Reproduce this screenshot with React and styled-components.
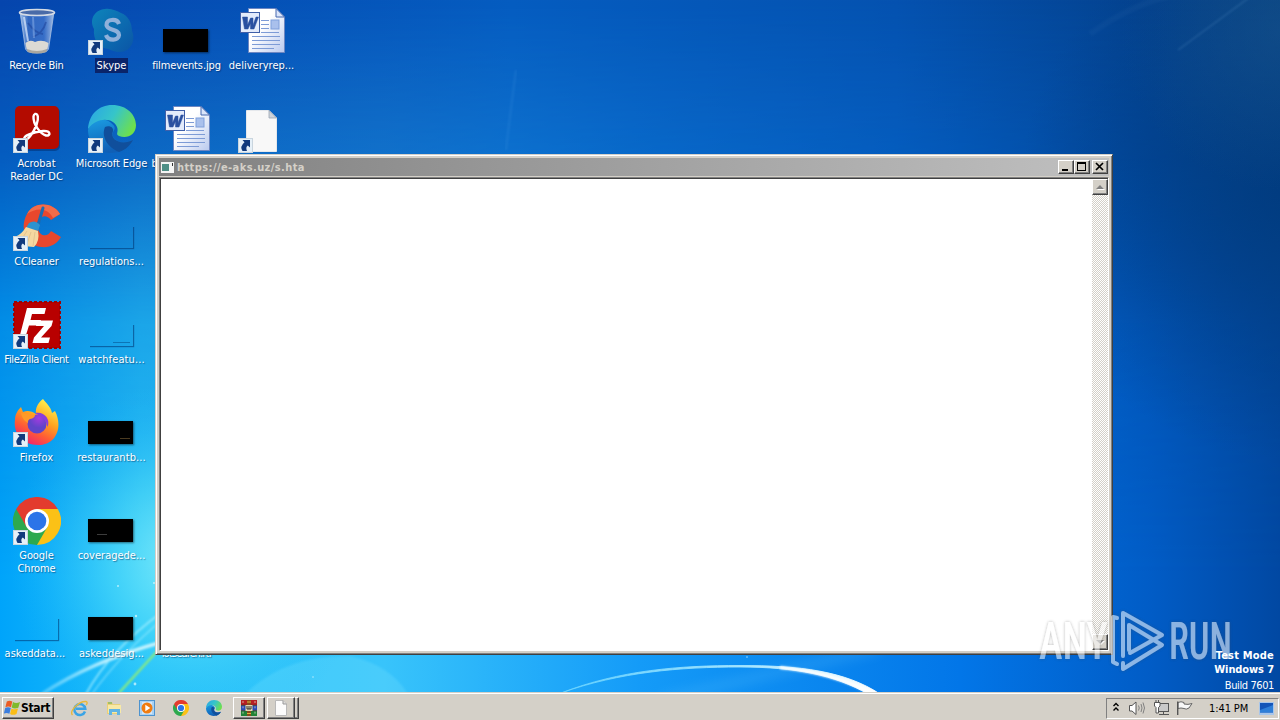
import React from "react"
import styled, { createGlobalStyle, css } from "styled-components"

const UI_FONT = `"DejaVu Sans Condensed", "DejaVu Sans", sans-serif`
const FACE = "#d4d0c8"

const GlobalStyle = createGlobalStyle`
  body {
    margin: 0;
    overflow: hidden;
    font-family: ${UI_FONT};
    font-stretch: condensed;
    font-size: 11px;
  }
  svg {
    display: block;
    flex: none;
  }
`

const raised = css`
  border: 1px solid;
  border-color: #fff #404040 #404040 #fff;
  box-shadow: inset -1px -1px 0 #808080;
  background: ${FACE};
`

const Screen = styled.div`
  position: relative;
  width: 1280px;
  height: 720px;
  overflow: hidden;
  display: flex;
  flex-direction: column;
`

const Wallpaper = styled.svg`
  position: absolute;
  inset: 0;
`

const Desktop = styled.main`
  position: relative;
  flex: 1;
`

const IconGrid = styled.div`
  display: grid;
  grid-auto-flow: column;
  grid-template-rows: repeat(7, 98px);
  grid-auto-columns: 75px;
  width: 300px;
  height: 686px;
  margin-left: -1px;
`

const Shortcut = styled.div`
  display: flex;
  flex-direction: column;
  align-items: center;
  padding-top: 7px;
`

const Picture = styled.div`
  position: relative;
  width: 48px;
  height: 48px;
  flex: none;
  margin-left: 1px;
`

const Arrow = styled.svg`
  position: absolute;
  left: 0;
  bottom: 0;
`

const Label = styled.span`
  margin-top: 3px;
  padding: 1px 2px;
  line-height: 13px;
  text-align: center;
  white-space: pre;
  color: #fff;
  letter-spacing: ${props => props.$spacing || 0}px;
  text-shadow: ${props => (props.$selected ? "none" : "1px 1px 1px rgba(0, 20, 60, .45)")};
  background: ${props => (props.$selected ? "#0a246a" : "transparent")};
`

const Thumb = styled.div`
  position: absolute;
  left: 0;
  top: 22px;
  width: 45px;
  height: 23px;
  display: flex;
  align-items: flex-end;
  justify-content: ${props => (props.$mark === "left" ? "flex-start" : "flex-end")};
  background: ${props => (props.$empty ? "transparent" : "#000")};
  box-shadow: ${props => (props.$empty ? "1px 1px 1px rgba(0, 50, 110, .55)" : "1px 1px 2px rgba(0, 0, 0, .5)")};
  ${props => props.$empty && css`clip-path: inset(2px -3px -3px 2px);`}
`

const ThumbMark = styled.i`
  width: ${props => props.$width || 10}px;
  height: 1px;
  margin: 0 3px ${props => props.$up || 5}px 9px;
  background: ${props => props.$color};
`

const Window = styled.section`
  position: absolute;
  left: 155px;
  top: 154px;
  width: 958px;
  height: 501px;
  box-sizing: border-box;
  display: flex;
  flex-direction: column;
  padding: 2px;
  border: 1px solid;
  border-color: ${FACE} #404040 #404040 ${FACE};
  box-shadow: inset 1px 1px 0 #fff, inset -1px -1px 0 #808080;
  background: ${FACE};
`

const TitleBar = styled.header`
  display: flex;
  align-items: center;
  gap: 3px;
  height: 18px;
  margin: 1px 1px 1px;
  padding: 0 1px 0 2px;
  background: linear-gradient(to right, #808080, #c0c0c0);
`

const Title = styled.h1`
  flex: 1;
  margin: 0;
  font-size: 11px;
  font-weight: bold;
  letter-spacing: ${props => props.$spacing}px;
  color: ${FACE};
`

const Controls = styled.div`
  display: flex;
`

const ControlButton = styled.div`
  ${raised}
  box-sizing: border-box;
  width: 16px;
  height: 14px;
  margin-left: ${props => (props.$apart ? 2 : 0)}px;
`

const Client = styled.div`
  flex: 1;
  display: flex;
  justify-content: flex-end;
  margin: 0 1px 1px;
  border: 1px solid;
  border-color: #808080 #fff #fff #808080;
  box-shadow: inset 1px 1px 0 #404040;
  background: #fff;
`

const ScrollBar = styled.div`
  width: 16px;
  display: flex;
  flex-direction: column;
  justify-content: space-between;
  margin: 1px 0 0;
  background: repeating-conic-gradient(#fff 0 25%, ${FACE} 0 50%) 0 0 / 2px 2px;
`

const ScrollButton = styled.div`
  ${raised}
  box-sizing: border-box;
  width: 16px;
  height: 16px;
`

const Watermark = styled.svg`
  position: absolute;
  left: 1030px;
  top: 600px;
  overflow: visible;
`

const BuildInfo = styled.div`
  position: absolute;
  right: 6px;
  bottom: -1px;
  text-align: right;
  line-height: 14px;
  color: #fff;
`

const InfoLine = styled.p`
  margin: 0;
  padding-top: ${props => (props.$bold ? 0 : 2)}px;
  font-weight: ${props => (props.$bold ? "bold" : "normal")};
  letter-spacing: ${props => props.$spacing || 0}px;
`

const Taskbar = styled.footer`
  position: relative;
  box-sizing: border-box;
  height: 28px;
  display: flex;
  align-items: center;
  padding: 3px 2px 0;
  border-top: 1px solid ${FACE};
  box-shadow: inset 0 1px 0 #fff;
  background: ${FACE};
`

const StartButton = styled.div`
  ${raised}
  box-sizing: border-box;
  width: 52px;
  height: 22px;
  display: flex;
  align-items: center;
  gap: 1px;
  padding-left: 1px;
  font-size: 12px;
  font-weight: bold;
  letter-spacing: ${props => props.$spacing}px;
`

const QuickLaunch = styled.nav`
  display: flex;
  align-items: center;
  gap: 17.6px;
  margin: 0 11px 0 17px;
`

const TaskButton = styled.div`
  ${raised}
  box-sizing: border-box;
  width: ${props => (props.$stacked ? 28 : 32)}px;
  height: 22px;
  display: flex;
  align-items: center;
  justify-content: center;
  margin-right: 2px;
`

const StackedEdge = styled.div`
  box-sizing: border-box;
  width: 4px;
  height: 22px;
  margin-left: -2px;
  border-top: 1px solid #fff;
  border-right: 1px solid #404040;
  border-bottom: 1px solid #404040;
  box-shadow: inset -1px -1px 0 #808080;
`

const Tray = styled.div`
  box-sizing: border-box;
  width: 173px;
  height: 21px;
  display: flex;
  align-items: center;
  margin-left: auto;
  margin-right: -1px;
  padding-left: 5px;
  border: 1px solid;
  border-color: #808080 #fff #fff #808080;
`

const Clock = styled.time`
  flex: none;
  width: 40px;
  margin: 0 10px 0 15px;
  white-space: nowrap;
  letter-spacing: ${props => props.$spacing}px;
`

const RecycleBin = () => (
  <svg width="48" height="48" viewBox="0 0 48 48">
    <defs>
      <linearGradient id="bin" x1="0" x2="1">
        <stop offset="0" stopColor="#b5d0f2" stopOpacity=".9" />
        <stop offset=".25" stopColor="#3e70c4" stopOpacity=".8" />
        <stop offset=".7" stopColor="#4a7bd0" stopOpacity=".7" />
        <stop offset="1" stopColor="#b9cdea" stopOpacity=".9" />
      </linearGradient>
    </defs>
    <path d="M7 5 L12.500 42 Q14 46 24 46 Q34 46 35.500 42 L41 5Z" fill="url(#bin)" stroke="#a9c0e2" strokeWidth=".8" />
    <path d="M12.500 36 Q17 32 22 35 Q29 32 35.500 36 L34.500 42 Q30 45 24 45 Q15 45 13.500 42Z" fill="#dcdad4" />
    <path d="M14 42 Q24 46 34 42 L33.500 45 Q24 48 14.500 45Z" fill="#aaa79f" />
    <path d="M15 16 Q22 26 30 27 M33 15 Q30 26 20 30" stroke="#1f469c" strokeWidth="1.800" fill="none" opacity=".6" />
    <path d="M11 10 L15 34" stroke="#d5e4fa" strokeWidth="2" opacity=".75" />
    <path d="M20 10 L21 31" stroke="#8eb2ea" strokeWidth="2" opacity=".5" />
    <ellipse cx="24" cy="5.500" rx="17.500" ry="3" fill="#4a6ba8" stroke="#d5dbe5" strokeWidth="1.600" />
  </svg>
)

const Skype = () => (
  <svg width="48" height="48" viewBox="0 0 48 48">
    <defs>
      <linearGradient id="skype" x1="0" x2="1" y1="0" y2="1">
        <stop offset="0" stopColor="#0d84bb" />
        <stop offset="1" stopColor="#0b55a6" />
      </linearGradient>
    </defs>
    <path d="M17 2 C23 1 29 4 33 6 C41 9 44 17 44 24 C48 33 43 45 32 45 C26 45 24 43 20 42 C10 41 5 32 6 22 C1 13 6 3 17 2Z" fill="url(#skype)" />
    <path d="M31 17 C29 11 18 12 18.500 18 C19 24 31 21.500 31 28 C30.500 34.500 20 34 18 28" fill="none" stroke="#8fb0da" strokeWidth="4.200" />
  </svg>
)

const Acrobat = () => (
  <svg width="48" height="48" viewBox="0 0 48 48">
    <rect x="3" y="2.500" width="44" height="43.500" rx="5" fill="#001f55" opacity=".4" />
    <rect x="2" y="1" width="44" height="43" rx="5" fill="#b30b00" />
    <path d="M22 9 C25 8 26 13 23.500 20 C20 29 14 36 11.500 34.500 C9 31 20 27 30 26 C38 25.500 38 31 33 30.500 C27 28.500 20 19 20.500 11.500 C20.700 10 21 9.400 22 9Z" fill="none" stroke="#fff" strokeWidth="2.400" />
  </svg>
)

const Edge = ({ size = 48, id = "edge" }) => (
  <svg width={size} height={size} viewBox="0 0 48 48">
    <defs>
      <linearGradient id={`${id}-top`} x1="0" x2="1" y1=".2" y2=".6">
        <stop offset="0" stopColor="#2aa7e4" />
        <stop offset=".5" stopColor="#36c5c9" />
        <stop offset="1" stopColor="#6fe04a" />
      </linearGradient>
      <linearGradient id={`${id}-body`} x1="0" x2=".3" y1="0" y2="1">
        <stop offset="0" stopColor="#1b9de2" />
        <stop offset="1" stopColor="#0f5fb6" />
      </linearGradient>
    </defs>
    <path d="M0 25 C2 15 14 11 22 17 C27 21 28 23 25 27 C22 34 33 41 45 35 C40 44 31 48 23 48 C10 48 0 38 0 25Z" fill={`url(#${id}-body)`} />
    <path d="M17 22 C13 31 19 42 31 47 C38 45 43 39 45 35 C34 41 21 35 25 26 C26 23 22 20 17 22Z" fill="#104f9c" />
    <path d="M0 24 C1 9 11 0 24 0 C39 0 48 10 48 20 C48 30 39 34 31 31 C27 29 31 27 29 22 C26 13 9 11 0 24Z" fill={`url(#${id}-top)`} />
  </svg>
)

const CCleaner = () => (
  <svg width="48" height="48" viewBox="0 0 48 48">
    <path d="M47 11 C40 -1 21 -2 14 11 C6 25 13 43 28 44 C37 45 44 41 48 34 L38 28 C35 34 27 34 25 26 C22 17 31 8 38 17Z" fill="#e8472d" />
    <path d="M47 11 C40 -1 21 -2 14 11 C24 4 35 5 40 15Z" fill="#f26c4a" />
    <path d="M30 5 L25 22" stroke="#1a6cb4" strokeWidth="3" strokeLinecap="round" />
    <path d="M16 20 Q22 16 27 22 L25 28 L13 25Z" fill="#2c93cf" />
    <path d="M13 24 L25 28 Q27 38 21 44 Q9 44 2 34 Q9 31 13 24Z" fill="#f5d8a0" />
    <path d="M14 28 L8 37 M18 29 L14 41 M22 29 L20 43" stroke="#e4c490" />
  </svg>
)

const FileZilla = () => (
  <svg width="48" height="48" viewBox="0 0 48 48">
    <rect x="1" y="1" width="46" height="46" fill="#b80000" />
    <rect x="1" y="1" width="46" height="46" fill="none" stroke="#a00000" strokeWidth="2" strokeDasharray="3 2" />
    <path d="M14 7 H33 L31.500 13 H19 L17.500 19 H28 L26.500 24.500 H16 L13 34 H7Z" fill="#fff" />
    <path d="M24 19.500 H40 L38.500 25 L28 36.500 H37 L35.500 42 H19.500 L21 36.500 L31 25 H23Z" fill="#fff" />
  </svg>
)

const Firefox = () => (
  <svg width="48" height="48" viewBox="0 0 48 48">
    <defs>
      <linearGradient id="fox" x1=".8" x2=".3" y1=".05" y2="1">
        <stop offset="0" stopColor="#fff44f" />
        <stop offset=".4" stopColor="#ffa41f" />
        <stop offset=".7" stopColor="#ff5b36" />
        <stop offset="1" stopColor="#ee2072" />
      </linearGradient>
      <radialGradient id="globe" cx=".6" cy=".2">
        <stop offset="0" stopColor="#a33be0" />
        <stop offset="1" stopColor="#6144c8" />
      </radialGradient>
    </defs>
    <path d="M30 0 C33 4 38 8 39 14 L42 12 C50 27 44 46 25 46 C9 46 0 34 2 21 C2 15 5 11 8 8 L10 13 C14 11 19 12 23 15 C22 8 26 3 30 0Z" fill="url(#fox)" />
    <circle cx="24" cy="25" r="9.500" fill="url(#globe)" />
    <path d="M8 14 L22 16 Q22 19 17 20 Q14 21 15 24 C13 23 9 20 8 14Z" fill="#ff9a28" />
    <path d="M22 14 C31 12 38 20 34.500 28 Q33 20 27 17Z" fill="#8a3ddc" />
  </svg>
)

const Chrome = ({ size = 48 }) => (
  <svg width={size} height={size} viewBox="0 0 48 48">
    <path d="M24 24 L3.200 12 A24 24 0 0 1 44.800 12Z" fill="#e33b2e" />
    <path d="M24 24 L44.800 12 A24 24 0 0 1 24 48Z" fill="#fbc116" />
    <path d="M24 24 L24 48 A24 24 0 0 1 3.200 12Z" fill="#2da94f" />
    <path d="M24 12 H44.800 L40 24 H30Z" fill="#fbc116" />
    <path d="M3.200 12 L13.500 30 L24 24 L24 12Z" fill="#e33b2e" />
    <path d="M24 48 L34.400 30 L24 24 L13.500 30Z" fill="#2da94f" />
    <circle cx="24" cy="24" r="12" fill="#fff" />
    <circle cx="24" cy="24" r="9.300" fill="#2b74e8" />
  </svg>
)

const WordDoc = () => (
  <svg width="48" height="48" viewBox="0 0 48 48">
    <defs>
      <linearGradient id="page" x1="0" x2="1" y1="0" y2="1">
        <stop offset=".4" stopColor="#fff" />
        <stop offset="1" stopColor="#b9c9ee" />
      </linearGradient>
    </defs>
    <path d="M10.500 1.500 H38 L46.500 10 V45.500 H10.500Z" fill="url(#page)" stroke="#6d87c2" />
    <path d="M38 1.500 V10 H46.500Z" fill="#dbe5fa" stroke="#4668af" />
    <path d="M23 13.500 H31 M23 17.500 H31 M23 21.500 H31 M23 25.500 H41 M14 29.500 H42 M14 33.500 H42 M14 37.500 H42 M14 41.500 H36" stroke="#7d9bd6" />
    <rect x="33" y="13" width="8" height="9" fill="#a9c0ec" stroke="#7f9fdb" />
    <rect x="2.500" y="5.500" width="19" height="20" fill="#e3ebfb" stroke="#3f5fa8" />
    <path d="M4.500 10 H9.500 L9.500 18 L12.500 11 H15 L15 18 L18 10 H20.500 L16 22 H12.500 L12.500 16.500 L10 22 H6.500Z" fill="#2a50a0" stroke="#2a50a0" strokeWidth=".5" />
  </svg>
)

const BlankFile = () => (
  <svg width="48" height="48" viewBox="0 0 48 48">
    <path d="M8.500 5.500 H31 L38.500 13 V46.500 H8.500Z" fill="#f8f8f8" stroke="#e5e8ec" />
    <path d="M31 5.500 V13 H38.500Z" fill="#cfd4da" stroke="#9aa5b2" strokeWidth=".8" />
  </svg>
)

const ShortcutArrow = () => (
  <Arrow width="15" height="15" viewBox="0 0 15 15">
    <rect x=".5" y=".5" width="14" height="14" fill="#e6f0f8" stroke="#c9d5de" />
    <path d="M4.500 2 H12 V9.500 L9.800 7.600 Q7.300 9.500 9 13 H4.500 Q1.500 8.500 6.500 4.300Z" fill="#123a7c" />
  </Arrow>
)

const IELogo = () => (
  <svg width="17" height="17" viewBox="0 0 17 17">
    <path d="M14 11.500 A5.500 5.500 0 1 1 14.300 8.800 H5" fill="none" stroke="#3aa4e6" strokeWidth="2.500" />
    <path d="M1.500 15 C-2 11 8 1 15 1.500 C17 2 16 4 15 5" fill="none" stroke="#e8b839" strokeWidth="1.300" />
  </svg>
)

const Folder = () => (
  <svg width="16" height="16" viewBox="0 0 16 16">
    <path d="M1 2 H6 L7 4 H14 V14 H1Z" fill="#e9cf78" />
    <path d="M2 5 H15 V13 H2Z" fill="#f8e9a6" />
    <path d="M3 15 V9 H14 V15 H11 V12 H6 V15Z" fill="#62b4e4" />
    <path d="M2 3 H6" stroke="#5dad54" />
  </svg>
)

const MediaPlayer = () => (
  <svg width="16" height="16" viewBox="0 0 16 16">
    <rect x=".5" y=".5" width="15" height="15" fill="#a9d2f4" stroke="#4d93cf" />
    <rect x="3" y="2" width="10" height="12" fill="#d4e8fa" />
    <circle cx="8" cy="8" r="5.500" fill="#f07c11" />
    <path d="M6.300 4.800 L11.300 8 L6.300 11.200Z" fill="#fff" />
  </svg>
)

// three stacked books held by a belt
const WinRar = () => (
  <svg width="16" height="16" viewBox="0 0 16 16">
    <rect width="16" height="5" fill="#b51f25" />
    <rect y="5.500" width="16" height="5" fill="#2948b5" />
    <rect y="11" width="16" height="5" fill="#218237" />
    <path d="M0 5.300 H16 M0 10.700 H16" stroke="#222" strokeWidth=".8" />
    <rect x="6" width="4" height="16" fill="#8b4a1e" />
    <rect x="4.500" y="5" width="7" height="6" fill="#e2d7b4" />
    <path d="M6 6 V9 H10 V6 M8 6 V9" stroke="#333" fill="none" />
    <path d="M6 2 H10 M6 13.500 H10" stroke="#e4b43c" />
    <path d="M2 1 V15 M14 1 V15" stroke="#e8e2d0" strokeWidth=".7" strokeDasharray="2 3.300" />
  </svg>
)

const WindowsFlag = () => (
  <svg width="16" height="16" viewBox="0 0 16 16">
    <path d="M2.800 1.600 Q5.500 0 8.300 1.600 L7 7.200 Q4.500 5.600 1.400 7.200Z" fill="#ea5b24" />
    <path d="M9 2 Q12 3.800 16 2 L14.300 7.700 Q10.800 9.400 7.700 7.600Z" fill="#7fba2c" />
    <path d="M1.200 8 Q4 6.500 6.800 8 L5.400 13.700 Q2.500 12.200 -.2 13.700Z" fill="#3c7ede" />
    <path d="M7.500 8.400 Q10.500 10.200 14 8.500 L12.500 14 Q9 15.700 6.100 14Z" fill="#fabd16" />
  </svg>
)

const shortcuts = [
  { label: "Recycle Bin", icon: <RecycleBin />, spacing: -0.25 },
  { label: "Acrobat\nReader DC", icon: <Acrobat />, link: true },
  { label: "CCleaner", icon: <CCleaner />, link: true, spacing: -0.1 },
  { label: "FileZilla Client", icon: <FileZilla />, link: true, spacing: -0.32 },
  { label: "Firefox", icon: <Firefox />, link: true, spacing: 0.1 },
  { label: "Google\nChrome", icon: <Chrome />, link: true, spacing: -0.1 },
  { label: "askeddata... ", icon: <Thumb $empty /> },
  { label: "Skype", icon: <Skype />, link: true, selected: true },
  { label: "Microsoft Edge", icon: <Edge />, link: true, spacing: -0.12 },
  { label: "regulations...", icon: <Thumb $empty /> },
  { label: "watchfeatu...", icon: <Thumb $empty><ThumbMark $color="rgba(0, 70, 130, .5)" $width={17} $up={3} /></Thumb>, spacing: 0.1 },
  { label: "restaurantb...", icon: <Thumb><ThumbMark $color="#4a3a20" /></Thumb>, spacing: 0.1 },
  { label: "coveragede...", icon: <Thumb $mark="left"><ThumbMark $color="#3d3d3d" $up={7} /></Thumb> },
  { label: "askeddesig...", icon: <Thumb /> },
  { label: "filmevents.jpg", icon: <Thumb />, spacing: -0.12 },
  { label: "buttonscase...", icon: <WordDoc /> },
  { label: "", icon: null },
  { label: "", icon: null },
  { label: "", icon: null },
  { label: "", icon: null },
  { label: "lotsearch.rtf", icon: null, spacing: -0.8 },
  { label: "deliveryrep...", icon: <WordDoc /> },
  { label: "", icon: <BlankFile />, link: true },
]

const Background = () => (
  <Wallpaper width="1280" height="720" viewBox="0 0 1280 720">
    <defs>
      <linearGradient id="sky" x1="0" x2="1" y1="0" y2="0">
        <stop offset="0" stopColor="#0645ad" />
        <stop offset=".4" stopColor="#055cc0" />
        <stop offset=".7" stopColor="#0552b0" />
        <stop offset=".9" stopColor="#04428e" />
        <stop offset="1" stopColor="#0a4480" />
      </linearGradient>
      <linearGradient id="low" x1="0" x2="1">
        <stop offset="0" stopColor="#00a4fa" />
        <stop offset=".11" stopColor="#22c2fa" />
        <stop offset=".3" stopColor="#38c4fb" />
        <stop offset=".5" stopColor="#149bf8" />
        <stop offset=".75" stopColor="#0276e8" />
        <stop offset=".9" stopColor="#015cc6" />
        <stop offset="1" stopColor="#0148a2" />
      </linearGradient>
      <linearGradient id="fade" x1="0" x2="0" y1="0" y2="1">
        <stop offset="0" stopColor="#fff" stopOpacity="0" />
        <stop offset=".22" stopColor="#fff" stopOpacity=".25" />
        <stop offset=".45" stopColor="#fff" stopOpacity=".76" />
        <stop offset=".8" stopColor="#fff" />
      </linearGradient>
      <mask id="lower"><rect width="1280" height="720" fill="url(#fade)" /></mask>
      <radialGradient id="glow" cx="190" cy="560" r="180" gradientUnits="userSpaceOnUse">
        <stop offset="0" stopColor="#94f3fa" stopOpacity=".9" />
        <stop offset=".45" stopColor="#5fe3f8" stopOpacity=".5" />
        <stop offset="1" stopColor="#20b8f8" stopOpacity="0" />
      </radialGradient>
      <radialGradient id="dark" cx="1290" cy="190" r="270" gradientUnits="userSpaceOnUse">
        <stop offset="0" stopColor="#003a7e" stopOpacity=".85" />
        <stop offset="1" stopColor="#003a7e" stopOpacity="0" />
      </radialGradient>
      <radialGradient id="corner" cx="1280" cy="30" r="160" gradientUnits="userSpaceOnUse">
        <stop offset="0" stopColor="#1a5690" stopOpacity=".45" />
        <stop offset="1" stopColor="#1a5690" stopOpacity="0" />
      </radialGradient>
      <linearGradient id="arc" x1="560" x2="880" gradientUnits="userSpaceOnUse">
        <stop offset="0" stopColor="#6cd6ff" stopOpacity=".8" />
        <stop offset=".6" stopColor="#a7e6ff" />
        <stop offset="1" stopColor="#fff" />
      </linearGradient>
      <linearGradient id="ray" x1="42" x2="110" gradientUnits="userSpaceOnUse">
        <stop offset="0" stopColor="#8fe4ff" stopOpacity=".5" />
        <stop offset="1" stopColor="#d2f7ff" />
      </linearGradient>
      <filter id="soft"><feGaussianBlur stdDeviation=".8" /></filter>
      <filter id="haze"><feGaussianBlur stdDeviation="6" /></filter>
    </defs>
    <rect width="1280" height="720" fill="url(#sky)" />
    <rect width="1280" height="720" fill="url(#low)" mask="url(#lower)" />
    <rect width="1280" height="720" fill="url(#glow)" />
    <rect width="1280" height="720" fill="url(#dark)" />
    <rect width="1280" height="720" fill="url(#corner)" />
    <path d="M1178 50 L1250 -3" stroke="#4f86bd" strokeWidth="1.500" opacity=".35" filter="url(#soft)" />
    <path d="M1090 34 Q1130 5 1170 -4" stroke="#4f86bd" strokeWidth="6" fill="none" opacity=".08" filter="url(#soft)" />
    <path d="M516 70 Q510 115 506 150" stroke="#52a0e6" strokeWidth="2" fill="none" opacity=".18" filter="url(#soft)" />
    <path d="M245 694 Q285 655 350 656 Q390 665 408 694Z" fill="#8cecff" opacity=".2" filter="url(#soft)" />
    <path d="M660 700 L880 648" stroke="#7fd8ff" strokeWidth="8" opacity=".2" filter="url(#haze)" />
    <g fill="none" filter="url(#soft)">
      <path d="M42 694 Q90 662 162 642" stroke="url(#ray)" strokeWidth="3.500" opacity=".9" />
      <path d="M86 694 Q110 650 162 612" stroke="#a6efff" strokeWidth="1.800" opacity=".75" />
      <path d="M92 694 Q120 655 162 620" stroke="#a6efff" strokeWidth="1.300" opacity=".6" />
      <path d="M118 694 Q138 672 160 648" stroke="#8dec7c" strokeWidth="2.200" />
    </g>
    <path d="M561 693 C620 672 680 667 740 667 C795 667 835 675 868 694 L880 694 C845 671 800 665.500 740 665.500 C680 665.500 620 670 561 693Z" fill="url(#arc)" stroke="url(#arc)" strokeWidth=".9" />
    <path d="M780 667.500 Q835 673 873 694" stroke="#fff" strokeWidth="3" fill="none" filter="url(#soft)" />
    <g fill="#e2fbff" opacity=".7">
      <circle cx="118" cy="586" r="1" /><circle cx="154" cy="583" r="1" />
      <circle cx="136" cy="616" r="1.200" /><circle cx="135" cy="684" r="1.400" />
      <circle cx="747" cy="657" r=".8" /><circle cx="313" cy="677" r=".8" />
    </g>
  </Wallpaper>
)

const AnyRunMark = () => (
  <Watermark width="220" height="80" viewBox="0 0 220 80">
    <defs>
      <filter id="lift" x="-10%" y="-10%" width="120%" height="120%">
        <feDropShadow dx="0" dy="0" stdDeviation="1.800" floodColor="#444" floodOpacity=".7" />
      </filter>
    </defs>
    <g opacity=".55" filter="url(#lift)" fill="#fff" fontFamily="Roboto, sans-serif" fontWeight="500" fontSize="51">
      <text x="9" y="59" textLength="69" lengthAdjust="spacingAndGlyphs">ANY</text>
      <text x="139" y="59" textLength="63" lengthAdjust="spacingAndGlyphs">RUN</text>
      <g fill="none" stroke="#fff" strokeWidth="4" strokeLinejoin="round" strokeLinecap="round">
        <path d="M93 56 V13 L132 35 L100 53" />
        <path d="M99 50 V25 L132 45 L93 69 V63" />
        <path d="M87 18 L83 17 V62 L87 64" />
      </g>
    </g>
  </Watermark>
)

const App = () => {
  return (
    <Screen>
      <GlobalStyle />
      <Background />
      <Desktop>
        <IconGrid>
          {shortcuts.map((item, i) => (
            <Shortcut key={i}>
              <Picture>
                {item.icon}
                {item.link && <ShortcutArrow />}
              </Picture>
              <Label $selected={item.selected} $spacing={item.spacing}>{item.label}</Label>
            </Shortcut>
          ))}
        </IconGrid>
        <Window>
          <TitleBar>
            <svg width="13" height="11" viewBox="0 0 13 11">
              <rect width="13" height="11" fill="#f4f4f4" />
              <rect x="1" y="2" width="7" height="7" fill="#4f8f86" />
              <path d="M11.500 1 V4" stroke="#333" />
            </svg>
            <Title $spacing={0.41}>https://e-aks.uz/s.hta</Title>
            <Controls>
              <ControlButton>
                <svg width="14" height="12"><path d="M3 9 H9" stroke="#000" strokeWidth="2" /></svg>
              </ControlButton>
              <ControlButton>
                <svg width="14" height="12">
                  <path d="M2 1 H11 V10 H2Z M3 3 V9 H10 V3Z" fillRule="evenodd" />
                </svg>
              </ControlButton>
              <ControlButton $apart>
                <svg width="14" height="12"><path d="M3 2 L10 9 M10 2 L3 9" stroke="#000" strokeWidth="1.700" /></svg>
              </ControlButton>
            </Controls>
          </TitleBar>
          <Client>
            <ScrollBar>
              <ScrollButton>
                <svg width="14" height="14"><path d="M4 10 H12 L8 6Z" fill="#fff" /><path d="M3 9 H11 L7 5Z" fill="#808080" /></svg>
              </ScrollButton>
              <ScrollButton>
                <svg width="14" height="14"><path d="M4 6 H12 L8 10Z" fill="#fff" /><path d="M3 5 H11 L7 9Z" fill="#808080" /></svg>
              </ScrollButton>
            </ScrollBar>
          </Client>
        </Window>
        <AnyRunMark />
        <BuildInfo>
          <InfoLine $bold $spacing={0.2}>Test Mode</InfoLine>
          <InfoLine $bold $spacing={-0.1}>Windows 7</InfoLine>
          <InfoLine $spacing={-0.4}>Build 7601</InfoLine>
        </BuildInfo>
      </Desktop>
      <Taskbar>
        <StartButton $spacing={-0.35}>
          <WindowsFlag />
          Start
        </StartButton>
        <QuickLaunch>
          <IELogo />
          <Folder />
          <MediaPlayer />
          <Chrome size={16} />
          <Edge size={16} id="edge-small" />
        </QuickLaunch>
        <TaskButton><WinRar /></TaskButton>
        <TaskButton $stacked>
          <svg width="14" height="16" viewBox="0 0 14 16">
            <path d="M1.500 .5 H9 L12.500 4 V15.500 H1.500Z" fill="#fcfcfc" stroke="#b9b9b9" />
            <path d="M9 .5 V4 H12.500" fill="#ddd" stroke="#999" />
          </svg>
        </TaskButton>
        <StackedEdge />
        <Tray>
          <svg width="8" height="12" viewBox="0 0 8 12">
            <path d="M1.500 4 L4 1.500 L6.500 4 M1.500 8.500 L4 6 L6.500 8.500" fill="none" stroke="#000" strokeWidth="1.400" />
          </svg>
          <svg width="57" height="16" viewBox="0 0 57 16">
            <g fill="#fff" stroke="#555">
              <path d="M9.500 5.500 H12 L16 2 V14.500 L12 11 H9.500Z" />
              <path d="M18.500 5.500 Q20 8 18.500 10.500 M21 4 Q23 8 21 12 M23 2.500 Q26 8 23 13.500" fill="none" stroke="#808080" />
              <rect x="38.500" y="3.500" width="10" height="8" fill="#c9c9c9" />
              <path d="M39 14.500 H49 M43.500 12 V14" />
              <path d="M34.500 2.500 H40 V6 L38.500 7.500 V13 H36 V7.500 L34.500 6Z M36 0 V3 M38.500 0 V3" />
            </g>
          </svg>
          <svg width="17" height="16" viewBox="0 0 17 16">
            <path d="M1 2.500 Q4 1 7 2.500 V4 Q11 5 15 3.500 L12 8 Q9 10 7 8.500 Q4 7.500 1 8.500Z" fill="#f7f7f7" stroke="#666" />
            <path d="M.7 1.500 V15" stroke="#555" strokeWidth="1.400" />
          </svg>
          <Clock $spacing={-0.1}>1:41 PM</Clock>
          <svg width="15" height="13" viewBox="0 0 15 13">
            <rect width="15" height="13" fill="#a8c6ea" />
            <rect x="1" y="1" width="13" height="9.500" fill="#1455b8" />
            <path d="M1 10.500 V8 L14 3 V10.500Z" fill="#2f7fd8" />
          </svg>
        </Tray>
      </Taskbar>
    </Screen>
  )
}

export default App
